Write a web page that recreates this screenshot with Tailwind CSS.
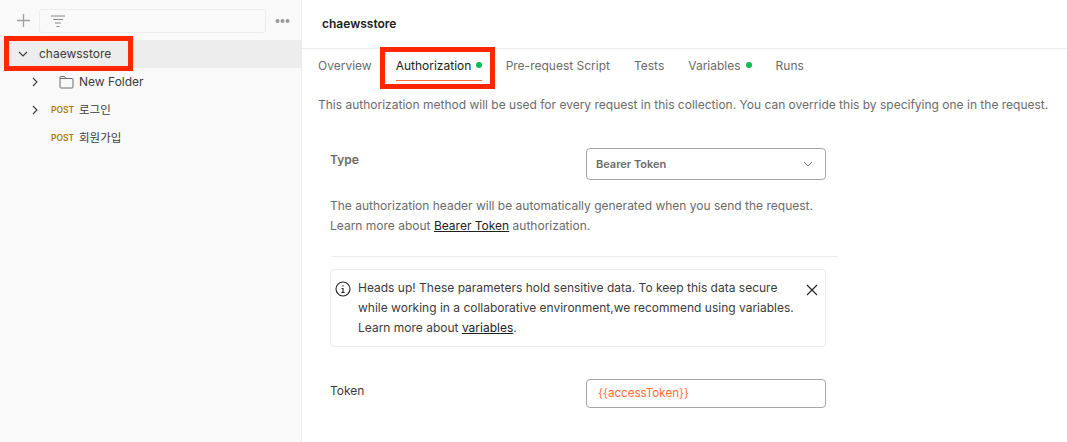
<!DOCTYPE html>
<html lang="ko">
<head>
    <meta charset="UTF-8">
    <title>chaewsstore</title>
    <script src="https://cdn.jsdelivr.net/npm/@tailwindcss/browser@4"></script>
</head>
<body class="bg-white overflow-hidden font-['Inter','Noto_Sans_CJK_KR',sans-serif]">
<div class="relative flex w-[1067px] h-[442px] overflow-hidden">

    <!-- sidebar -->
    <aside class="w-[302px] h-full shrink-0 bg-[#f9f9f9] border-r border-[#ededed]">
        <div class="flex items-center h-[40px] pt-[1px]">
            <svg class="ml-[17px] w-[13px] h-[13px] text-[#a0a0a0]" viewBox="0 0 13 13" fill="none" stroke="currentColor" stroke-width="1.3"><path d="M6.5 0v13M0 6.5h13"/></svg>
            <div class="ml-[9px] w-[227px] h-[24px] border border-[#ededed] rounded-[3px] flex items-center pl-[11px]">
                <svg class="w-[14px] h-[12px] text-[#8a8a8a]" viewBox="0 0 14 12" fill="none" stroke="currentColor" stroke-width="1"><path d="M0 1h14M2 4.5h10M4 8h6M5.5 11.5h3"/></svg>
            </div>
            <svg class="ml-[9px] w-[15px] h-[6px] text-[#9a9a9a]" viewBox="0 0 15 6" fill="currentColor"><circle cx="2.5" cy="3" r="2"/><circle cx="7.5" cy="3" r="2"/><circle cx="12.5" cy="3" r="2"/></svg>
        </div>
        <div class="flex items-center h-[28px] bg-[#ededed] text-[12px] text-[#3b3b3b]">
            <svg class="ml-[18px] w-[10px] h-[10px] text-[#3b3b3b]" viewBox="0 0 10 10" fill="none" stroke="currentColor" stroke-width="1.1"><path d="M1 3l4 4 4-4"/></svg>
            <span class="ml-[11px]">chaewsstore</span>
        </div>
        <div class="flex items-center h-[28px] text-[12px] text-[#3b3b3b]">
            <svg class="ml-[30px] w-[10px] h-[10px]" viewBox="0 0 10 10" fill="none" stroke="currentColor" stroke-width="1.1"><path d="M3 1l4 4-4 4"/></svg>
            <svg class="ml-[19px] w-[15px] h-[14px] text-[#6b6b6b]" viewBox="0 0 15 14" fill="none" stroke="currentColor" stroke-width="1"><path d="M1 12V2.5a1 1 0 0 1 1-1h3.5l1.5 2h6a1 1 0 0 1 1 1V12a1 1 0 0 1-1 1H2a1 1 0 0 1-1-1zM7 3.5H1"/></svg>
            <span class="ml-[5px]">New Folder</span>
        </div>
        <div class="flex items-center h-[28px] text-[11.5px] text-[#3b3b3b]">
            <svg class="ml-[30px] w-[10px] h-[10px]" viewBox="0 0 10 10" fill="none" stroke="currentColor" stroke-width="1.1"><path d="M3 1l4 4-4 4"/></svg>
            <span class="ml-[11px] w-[28px] text-[8.5px] font-semibold text-[#ad7a03]">POST</span>
            <span class="pt-[1px]">로그인</span>
        </div>
        <div class="flex items-center h-[28px] text-[11.5px] text-[#3b3b3b]">
            <span class="ml-[51px] w-[28px] text-[8.5px] font-semibold text-[#ad7a03]">POST</span>
            <span class="pt-[1px]">회원가입</span>
        </div>
    </aside>

    <!-- main -->
    <main class="flex-1 min-w-0">
        <div class="h-[49px] border-b border-[#ededed] flex items-center pl-[20px] text-[12px] font-semibold text-[#212121]">chaewsstore</div>

        <nav class="flex h-[32px] pl-[16px] text-[12px] text-[#6b6b6b]">
            <a class="pt-[8px]">Overview</a>
            <a class="ml-[24px] w-[86px] h-[32px] pt-[8px] border-b border-[#ff6c37] text-[#212121] flex items-start justify-between">Authorization<i class="w-[6px] h-[6px] mt-[5px] rounded-full bg-[#0cbb52]"></i></a>
            <a class="ml-[24px] pt-[8px]">Pre-request Script</a>
            <a class="ml-[24px] pt-[8px]">Tests</a>
            <a class="ml-[24px] pt-[8px] flex items-start">Variables<i class="ml-[5px] w-[6px] h-[6px] mt-[5px] rounded-full bg-[#0cbb52]"></i></a>
            <a class="ml-[24px] pt-[8px]">Runs</a>
        </nav>

        <p class="pl-[16px] pt-[16px] text-[12px] leading-[16px] text-[#6b6b6b] whitespace-nowrap">This authorization method will be used for every request in this collection. You can override this by specifying one in the request.</p>

        <div class="ml-[28px] w-[496px] mt-[35px]">
            <div class="flex justify-between items-start">
                <span class="text-[12px] font-semibold leading-[24px] text-[#6b6b6b]">Type</span>
                <div class="w-[240px] h-[32px] border border-[#a6a6a6] rounded-[4px] flex items-center justify-between pl-[9px] pr-[12px] text-[11px] font-semibold text-[#6b6b6b]">
                    Bearer Token
                    <svg class="w-[10px] h-[10px]" viewBox="0 0 10 10" fill="none" stroke="currentColor" stroke-width="1"><path d="M1 3l4 4 4-4"/></svg>
                </div>
            </div>
            <p class="mt-[16px] text-[12px] leading-[20px] text-[#6b6b6b] whitespace-nowrap">The authorization header will be automatically generated when you send the request.<br>Learn more about <a class="underline text-[#212121]">Bearer Token</a> authorization.</p>
        </div>

        <div class="ml-[30px] w-[506px] mt-[20px] border-t border-[#ededed]"></div>

        <div class="ml-[28px] mt-[12px] w-[496px] h-[78px] border border-[#ededed] rounded-[4px] flex items-start pl-[4px] pt-[8px]">
            <svg class="mt-[3px] w-[16px] h-[16px] text-[#212121] shrink-0" viewBox="0 0 16 16" fill="none" stroke="currentColor" stroke-width="1.1"><circle cx="8" cy="8" r="7"/><path d="M8 4.2v1.3M6.5 7.5H8v4M6.3 11.5h3.4"/></svg>
            <p class="ml-[7px] flex-1 text-[12px] leading-[20px] text-[#3b3b3b] whitespace-nowrap">Heads up! These parameters hold sensitive data. To keep this data secure<br>while working in a collaborative environment,we recommend using variables.<br>Learn more about <a class="underline text-[#212121]">variables</a>.</p>
            <svg class="mr-[7px] mt-[6px] w-[12px] h-[12px] text-[#212121] shrink-0" viewBox="0 0 12 12" fill="none" stroke="currentColor" stroke-width="1.1"><path d="M1 1l10 10M11 1L1 11"/></svg>
        </div>

        <div class="ml-[28px] mt-[32px] w-[496px] flex justify-between items-start">
            <span class="text-[12px] leading-[24px] text-[#3b3b3b]">Token</span>
            <div class="w-[240px] h-[29px] border border-[#a6a6a6] rounded-[4px] flex items-center pl-[11px] text-[11.6px] text-[#ff6c37]">{{accessToken}}</div>
        </div>
    </main>

    <!-- red annotation boxes -->
    <div class="absolute left-[4px] top-[36px] w-[129px] h-[35px] border-[5px] border-[#ff2600]"></div>
    <div class="absolute left-[380px] top-[47px] w-[115px] h-[42px] border-[5px] border-[#ff2600]"></div>
</div>
</body>
</html>
